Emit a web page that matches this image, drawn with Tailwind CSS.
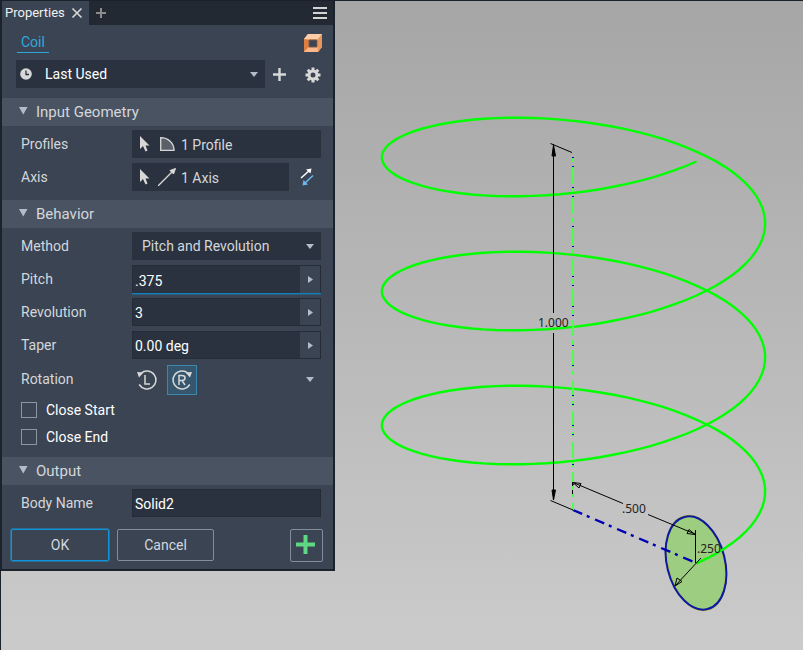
<!DOCTYPE html>
<html lang="en">
<head>
<meta charset="utf-8">
<title>Coil</title>
<script src="https://cdn.jsdelivr.net/npm/@tailwindcss/browser@4"></script>
</head>
<body class="font-[Roboto,sans-serif] text-sm">
<main class="relative min-h-screen overflow-hidden border-t border-l border-[#1c222c] bg-linear-to-b from-[#a6a6a6] to-[#cbcbcb]">

  <!-- Model view -->
  <svg class="absolute -top-px bottom-0 -left-px h-full w-full" role="img" aria-label="Coil preview" fill="none">
    <ellipse cx="696" cy="563" rx="28.5" ry="48" transform="rotate(-14 696 563)" fill="#9ccd80" stroke="#c3b51c" stroke-width="2"/>
    <ellipse cx="696" cy="563" rx="29" ry="47.5" transform="rotate(-14 696 563)" stroke="#0a1aa4" stroke-width="2"/>
    <path d="M573 510L696 563" stroke="#0000b4" stroke-width="2.400" stroke-dasharray="10 5 3 6"/>
    <path id="coil" stroke="#00ff00" stroke-width="2.400"/>
    <path d="M573 157V510" stroke="#4cff4c" stroke-width="2" stroke-dasharray="5 5 17 4 4 6 16 4"/>
    <path d="M573 157V510" stroke="#0000b4" stroke-width="2" stroke-dasharray="1 8 1 20 1 8 1 29 1 19 1 29"/>
    <g stroke="#000" stroke-width="1">
      <path d="M550.5 143.500L572 152.500M553.500 144V313M553.500 333V500M550.500 500.500L573 510"/>
      <path d="M553.500 145L552 156H555.500ZM553.500 500L552 490H555.500Z" fill="#000"/>
      <path d="M572.500 482V486M572.500 490V494M573 482.500L623 503.500M648 514.500L695 534M695.500 530V563M701 558L675 586"/>
      <path d="M573 482.500L581 483.500L579 488ZM695 534.500L687 533.500L689 529.500ZM675 586L677 578L682 581.500Z"/>
    </g>
    <g class="font-['Noto_Sans',sans-serif] text-xs" fill="#222">
      <text x="538" y="327">1.000</text>
      <text x="622" y="513">.500</text>
      <text x="697" y="553">.250</text>
    </g>
  </svg>

  <!-- Properties panel -->
  <form class="relative -mt-px -ml-px w-[335px] border-2 border-t border-[#1c222c] bg-[#3b4453] text-[#d3d7dc]">
    <header class="flex h-6 items-center bg-[#222933]">
      <div class="flex h-full w-[87px] items-center justify-between bg-[#3b4453] pr-1.5 pl-[3px] text-[13px] text-[#f0f0f0]">
        <span>Properties</span>
        <button type="button" aria-label="Close tab"><svg width="12" height="12" stroke="#d8d8d8" stroke-width="1.6"><path d="M1.500 1.500L10.500 10.500M10.500 1.500L1.500 10.500"/></svg></button>
      </div>
      <button type="button" class="ml-1.5" aria-label="New tab"><svg width="12" height="12" stroke="#8c8c8c" stroke-width="2"><path d="M6 1V11M1 6H11"/></svg></button>
      <button type="button" class="mr-1.5 ml-auto" aria-label="Menu"><svg width="14" height="12" stroke="#d4d4d4" stroke-width="2"><path d="M0 1H14M0 6H14M0 11H14"/></svg></button>
    </header>

    <div class="flex h-[35px] items-center justify-between pr-2.5 pl-[15px]">
      <a href="#" class="border-b border-[#2fa8dc] px-1 leading-5 text-[#2fa8dc]">Coil</a>
      <svg width="20" height="20" viewBox="0 0 20 20" aria-hidden="true"><path d="M1 6L5 1H19V14L15 19H1Z" fill="#f4ab76"/><path d="M1 6L5 1H19L15 6Z" fill="#fdcda8"/><path d="M15 6L19 1V14L15 19Z" fill="#e9965c"/><path d="M1 6L6 7V14L1 19Z" fill="#de7f42"/><path d="M1 19L6 14H14L15 19Z" fill="#f8b88c"/><path d="M6 7H14V14H6Z" fill="#3b4453" stroke="#7c5a48"/></svg>
    </div>

    <div class="flex h-[38px] items-start pr-3 pl-3.5">
      <div class="relative h-7 w-[249px]">
        <svg class="absolute top-2 left-1" width="12" height="12" aria-hidden="true"><circle cx="6" cy="6" r="5.800" fill="#d8d8d8"/><path d="M6 2.500V6.500H9" stroke="#2b323f" stroke-width="1.300" fill="none"/></svg>
        <select aria-label="Preset" class="h-7 w-full appearance-none bg-[#2b323f] pl-[29px] text-white"><option>Last Used</option></select>
        <svg class="absolute top-3 right-[7px]" width="8" height="5" fill="#b4bcc8" aria-hidden="true"><path d="M0 0H8L4 5Z"/></svg>
      </div>
      <button type="button" class="mt-2 ml-2" aria-label="Add preset"><svg width="13" height="13" stroke="#d8d8d8" stroke-width="2.400"><path d="M6.500 0V13M0 6.500H13"/></svg></button>
      <button type="button" class="mt-[7px] ml-auto" aria-label="Settings"><svg width="16" height="16" viewBox="-8 -8 16 16" fill="none" stroke="#d8d8d8"><circle r="4" stroke-width="3"/><path d="M0-7.500V-5M0 7.500V5M-7.500 0H-5M7.500 0H5M-5.300-5.300L-3.500-3.500M5.300 5.300L3.500 3.500M-5.300 5.300L-3.500 3.500M5.300-5.300L3.500-3.500" stroke-width="3"/></svg></button>
    </div>

    <h2 class="flex h-7 items-center gap-2 bg-[#4a5362] pt-0.5 pl-[17px] text-[15px]"><svg class="mb-1" width="9" height="8" fill="#b4bcc8" aria-hidden="true"><path d="M0 0H8.500L4.250 7.500Z"/></svg>Input Geometry</h2>
    <div class="grid grid-cols-[111px_minmax(0,1fr)] gap-y-[5px] pt-1 pr-3 pb-[9px] pl-[19px] leading-7">
      <span>Profiles</span>
      <button type="button" class="flex h-7 items-center bg-[#2b323f] pl-2">
        <svg width="10" height="16" viewBox="0 0 10 16" fill="#d8d8d8" aria-hidden="true"><path d="M0 0V13L3 10L5.500 15.500L7.500 14.500L5.500 9.500H9.500Z"/></svg>
        <svg class="ml-2.5" width="15" height="14" fill="#5a606a" stroke="#d8d8d8" stroke-width="1.300" aria-hidden="true"><path d="M.7 .7C8 .7 14 6 14 13.300H.7Z"/></svg>
        <span class="ml-1.5 pt-px">1 Profile</span>
      </button>
      <span>Axis</span>
      <div class="flex items-center justify-between">
        <button type="button" class="flex h-7 w-[157px] items-center bg-[#2b323f] pl-2">
          <svg width="10" height="16" viewBox="0 0 10 16" fill="#d8d8d8" aria-hidden="true"><path d="M0 0V13L3 10L5.500 15.500L7.500 14.500L5.500 9.500H9.500Z"/></svg>
          <svg class="ml-2" width="18" height="18" fill="#d8d8d8" stroke="#d8d8d8" aria-hidden="true"><path d="M0 18L14 4" stroke-width="1.300"/><path d="M17.500 .5L15.500 6L12 2.500Z"/></svg>
          <span class="ml-[5px] pt-px">1 Axis</span>
        </button>
        <button type="button" class="mr-1.5" aria-label="Flip axis"><svg width="15" height="18" fill="none" stroke-width="1.500"><path d="M1 10L10 2" stroke="#fff"/><path d="M11.500 .5L10.500 5.500L6 1.500Z" fill="#fff"/><path d="M13 7.500L5 15" stroke="#6cb8f0"/><path d="M2.500 17.500L3.500 12L8 16.500Z" fill="#6cb8f0"/></svg></button>
      </div>
    </div>

    <h2 class="flex h-7 items-center gap-2 bg-[#4a5362] pt-0.5 pl-[17px] text-[15px]"><svg class="mb-1" width="9" height="8" fill="#b4bcc8" aria-hidden="true"><path d="M0 0H8.500L4.250 7.500Z"/></svg>Behavior</h2>
    <div class="grid grid-cols-[111px_minmax(0,1fr)] gap-y-[5px] pt-1 pr-3 pl-[19px] leading-7">
      <label for="method">Method</label>
      <div class="relative">
        <select id="method" class="block h-7 w-full appearance-none bg-[#2b323f] pl-2.5"><option>Pitch and Revolution</option></select>
        <svg class="absolute top-3 right-[7px]" width="8" height="5" fill="#b4bcc8" aria-hidden="true"><path d="M0 0H8L4 5Z"/></svg>
      </div>
      <label for="pitch">Pitch</label>
      <div class="flex h-7 border border-b-0 border-[#252c37] bg-[#2b323f] shadow-[0_1px_0_#1180bd,0_2px_0_#2d5d7c]">
        <input id="pitch" value=".375" class="min-w-0 flex-1 px-0.5 pt-0.5 text-white outline-none">
        <button type="button" aria-label="Pitch options" class="flex w-5 items-center justify-center bg-[#3b4453]"><svg width="5" height="7" fill="#b4bcc8"><path d="M0 0V7L5 3.500Z"/></svg></button>
      </div>
      <label for="revolution">Revolution</label>
      <div class="flex h-7 border border-[#252c37] bg-[#2b323f]">
        <input id="revolution" value="3" class="min-w-0 flex-1 px-0.5 pt-0.5 text-white outline-none">
        <button type="button" aria-label="Revolution options" class="flex w-5 items-center justify-center bg-[#3b4453]"><svg width="5" height="7" fill="#b4bcc8"><path d="M0 0V7L5 3.500Z"/></svg></button>
      </div>
      <label for="taper">Taper</label>
      <div class="flex h-7 border border-[#252c37] bg-[#2b323f]">
        <input id="taper" value="0.00 deg" class="min-w-0 flex-1 px-0.5 pt-0.5 text-white outline-none">
        <button type="button" aria-label="Taper options" class="flex w-5 items-center justify-center bg-[#3b4453]"><svg width="5" height="7" fill="#b4bcc8"><path d="M0 0V7L5 3.500Z"/></svg></button>
      </div>
      <span class="leading-[30px]">Rotation</span>
      <div class="flex h-[31px] items-center">
        <button type="button" aria-label="Left" class="flex size-[30px] items-center justify-center"><svg width="22" height="22" viewBox="0 0 22 22" fill="none" stroke="#d8d8d8" stroke-width="1.500"><path d="M5 4.200A9 9 0 1 1 3.200 15.500"/><path d="M1 3L7.500 3.500L3 8.500Z" fill="#d8d8d8" stroke="none"/><path d="M9 6V15H14"/></svg></button>
        <button type="button" aria-label="Right" aria-pressed="true" class="ml-[5px] flex size-[30px] items-center justify-center border border-[#3f86ab] bg-[#36566d]"><svg width="22" height="22" viewBox="0 0 22 22" fill="none" stroke="#d8d8d8" stroke-width="1.500"><path d="M17 4.200A9 9 0 1 0 18.800 15.500"/><path d="M21 3L14.500 3.500L19 8.500Z" fill="#d8d8d8" stroke="none"/><path d="M8 16V6.500H11Q14 6.500 14 9T11 11.500H8M11 11.500L14 16"/></svg></button>
        <svg class="mr-[7px] ml-auto" width="8" height="5" fill="#b4bcc8" aria-hidden="true"><path d="M0 0H8L4 5Z"/></svg>
      </div>
    </div>
    <div class="flex flex-col gap-[7px] pt-[5px] pb-2.5 pl-[19px] leading-5 text-white">
      <label class="flex items-center gap-[9px]"><input type="checkbox" class="size-4 appearance-none border border-[#8c95a3]">Close Start</label>
      <label class="flex items-center gap-[9px]"><input type="checkbox" class="size-4 appearance-none border border-[#8c95a3]">Close End</label>
    </div>

    <h2 class="flex h-7 items-center gap-2 bg-[#4a5362] pt-0.5 pl-[17px] text-[15px]"><svg class="mb-1" width="9" height="8" fill="#b4bcc8" aria-hidden="true"><path d="M0 0H8.500L4.250 7.500Z"/></svg>Output</h2>
    <div class="grid grid-cols-[111px_minmax(0,1fr)] pt-1 pr-3 pl-[19px] leading-7">
      <label for="body-name">Body Name</label>
      <input id="body-name" value="Solid2" class="h-7 w-full min-w-0 border border-[#252c37] bg-[#2b323f] px-0.5 pt-0.5 text-white outline-none">
    </div>
    <div class="flex gap-2 pt-3 pr-2.5 pb-[7px] pl-[9px]">
      <button type="submit" class="h-8 w-[98px] rounded-xs border border-[#0f95dc] shadow-[0_0_0_1px_#2d6c93]">OK</button>
      <button type="button" class="h-8 w-[97px] rounded-xs border border-[#848d9b]">Cancel</button>
      <button type="button" aria-label="Apply and create new" class="ml-auto flex h-[33px] w-[33px] items-center justify-center rounded-xs border border-[#848d9b]"><svg class="mr-0.5 -mt-0.5" width="19" height="19" stroke="#5fd884" stroke-width="4"><path d="M9.500 0V19M0 9.500H19"/></svg></button>
    </div>
  </form>
</main>
<script>
  // Helix in oblique projection: centre, start vector, side vector and rise per turn.
  const base = { x: 573.5, y: 510.5 }, start = { x: 123, y: 53 }, side = { x: 147, y: -45 }, rise = 134;
  const points = [];
  for (let deg = 0; deg <= 1080; deg += 4) {
    const t = deg * Math.PI / 180;
    const x = base.x + start.x * Math.cos(t) + side.x * Math.sin(t);
    const y = base.y + start.y * Math.cos(t) + side.y * Math.sin(t) - rise * deg / 360;
    points.push(x.toFixed(1) + ' ' + y.toFixed(1));
  }
  document.getElementById('coil').setAttribute('d', 'M' + points.join('L'));
</script>
</body>
</html>
